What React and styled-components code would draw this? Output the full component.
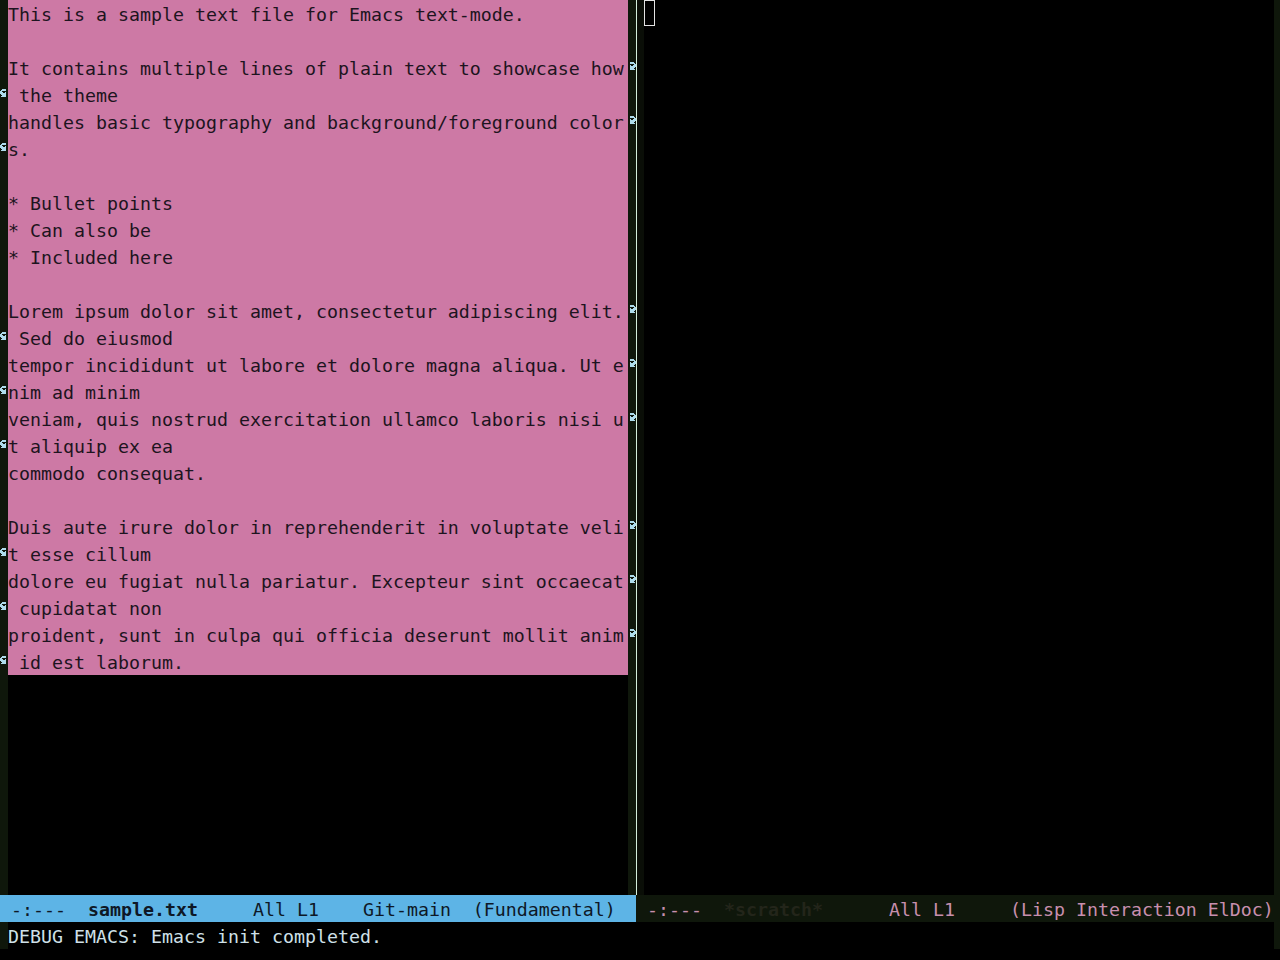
import React from "react";
import styled, { createGlobalStyle } from "styled-components";

// Emacs fringe bitmaps (8x8), MSB is the leftmost pixel
const LEFT_CURLY = [0x3c, 0x7c, 0xc0, 0xe4, 0xfc, 0x7c, 0x3c, 0x7c];
const RIGHT_CURLY = [0x3c, 0x3e, 0x03, 0x27, 0x3f, 0x3e, 0x3c, 0x3e];

const lines = [
  { text: "This is a sample text file for Emacs text-mode." },
  { text: "" },
  { text: "It contains multiple lines of plain text to showcase how", cont: true },
  { text: " the theme", wrap: true },
  { text: "handles basic typography and background/foreground color", cont: true },
  { text: "s.", wrap: true },
  { text: "" },
  { text: "* Bullet points" },
  { text: "* Can also be" },
  { text: "* Included here" },
  { text: "" },
  { text: "Lorem ipsum dolor sit amet, consectetur adipiscing elit.", cont: true },
  { text: " Sed do eiusmod", wrap: true },
  { text: "tempor incididunt ut labore et dolore magna aliqua. Ut e", cont: true },
  { text: "nim ad minim", wrap: true },
  { text: "veniam, quis nostrud exercitation ullamco laboris nisi u", cont: true },
  { text: "t aliquip ex ea", wrap: true },
  { text: "commodo consequat." },
  { text: "" },
  { text: "Duis aute irure dolor in reprehenderit in voluptate veli", cont: true },
  { text: "t esse cillum", wrap: true },
  { text: "dolore eu fugiat nulla pariatur. Excepteur sint occaecat", cont: true },
  { text: " cupidatat non", wrap: true },
  { text: "proident, sunt in culpa qui officia deserunt mollit anim", cont: true },
  { text: " id est laborum.", wrap: true },
];

const GlobalStyle = createGlobalStyle`
  html, body {
    margin: 0;
    padding: 0;
    background: #000;
    overflow: hidden;
  }
`;

const Frame = styled.div`
  width: 1280px;
  height: 960px;
  display: grid;
  grid-template-rows: 895px 27px 27px 1fr;
  background: #000;
  font-family: "DejaVu Sans Mono", "Liberation Mono", monospace;
  font-size: 18.27px;
`;

const WindowsRow = styled.div`
  display: flex;
  overflow: hidden;
`;

const Window = styled.div`
  display: flex;
  width: ${(p) => (p.width ? `${p.width}px` : "auto")};
  flex: ${(p) => (p.width ? "none" : "1")};
`;

const Fringe = styled.div`
  width: ${(p) => p.w}px;
  flex: none;
  background: ${(p) => p.bg || "#0f170b"};
  display: flex;
  flex-direction: column;
`;

const FringeCell = styled.div`
  height: 27px;
  flex: none;
  display: flex;
  justify-content: center;
  align-items: flex-start;
  padding-top: 8px;
  box-sizing: border-box;
`;

const TextArea = styled.div`
  width: ${(p) => (p.width ? `${p.width}px` : "auto")};
  flex: ${(p) => (p.width ? "none" : "1")};
  background: #000;
`;

const Buffer = styled.div`
  background: #cd79a5;
  color: #1d1420;
`;

const Line = styled.div`
  height: 27px;
  box-sizing: border-box;
  padding-top: 2px;
  line-height: 25px;
  white-space: pre;
  overflow: hidden;
`;

const Cursor = styled.span`
  display: inline-block;
  width: 11px;
  height: 26px;
  box-sizing: border-box;
  border: 1px solid #e4e4e4;
  vertical-align: top;
  margin-top: -2px;
`;

const Divider = styled.div`
  width: 1px;
  flex: none;
  background: #d4eedc;
`;

const BarRow = styled.div`
  display: flex;
`;

const ModeLine = styled.div`
  width: ${(p) => (p.width ? `${p.width}px` : "auto")};
  flex: ${(p) => (p.width ? "none" : "1")};
  height: 27px;
  box-sizing: border-box;
  padding-top: 2px;
  line-height: 25px;
  white-space: pre;
  overflow: hidden;
  background: ${(p) => (p.active ? "#5db4e6" : "#0f170b")};
  color: ${(p) => (p.active ? "#0e1826" : "#c88fae")};
`;

const BufferName = styled.span`
  font-weight: bold;
  color: ${(p) => (p.active ? "#0e1826" : "#23251a")};
`;

const Echo = styled.div`
  flex: 1;
  height: 27px;
  box-sizing: border-box;
  padding-top: 2px;
  line-height: 25px;
  white-space: pre;
  color: #cfe0e8;
  background: #000;
`;

function Bitmap({ rows }) {
  return (
    <svg width="8" height="8" viewBox="0 0 8 8" shapeRendering="crispEdges">
      {rows.flatMap((bits, y) =>
        Array.from({ length: 8 }, (_, x) =>
          bits & (0x80 >> x) ? (
            <rect key={`${y}-${x}`} x={x} y={y} width="1" height="1" fill="#aedcec" />
          ) : null
        )
      )}
    </svg>
  );
}

function FringeColumn({ w, bg, marks, bitmap }) {
  return (
    <Fringe w={w} bg={bg}>
      {marks.map((on, i) => (
        <FringeCell key={i}>{on && <Bitmap rows={bitmap} />}</FringeCell>
      ))}
    </Fringe>
  );
}

export default function App() {
  return (
    <>
      <GlobalStyle />
      <Frame>
        <WindowsRow>
          <Window width={636}>
            <FringeColumn w={8} marks={lines.map((l) => l.wrap)} bitmap={LEFT_CURLY} />
            <TextArea width={620}>
              <Buffer>
                {lines.map((l, i) => (
                  <Line key={i}>{l.text}</Line>
                ))}
              </Buffer>
            </TextArea>
            <FringeColumn w={8} marks={lines.map((l) => l.cont)} bitmap={RIGHT_CURLY} />
          </Window>
          <Divider />
          <Window>
            <Fringe w={7} bg="#0a0e07" />
            <TextArea>
              <Line>
                <Cursor />
              </Line>
            </TextArea>
            <Fringe w={14} />
          </Window>
        </WindowsRow>

        <BarRow>
          <ModeLine active width={636}>
            {" -:---  "}
            <BufferName active>sample.txt</BufferName>
            {"     All L1    Git-main  (Fundamental)"}
          </ModeLine>
          <ModeLine>
            {" -:---  "}
            <BufferName>*scratch*</BufferName>
            {"      All L1     (Lisp Interaction ElDoc)"}
          </ModeLine>
          <Fringe w={14} />
        </BarRow>

        <BarRow>
          <Fringe w={8} />
          <Echo>DEBUG EMACS: Emacs init completed.</Echo>
          <Fringe w={14} />
        </BarRow>
      </Frame>
    </>
  );
}
